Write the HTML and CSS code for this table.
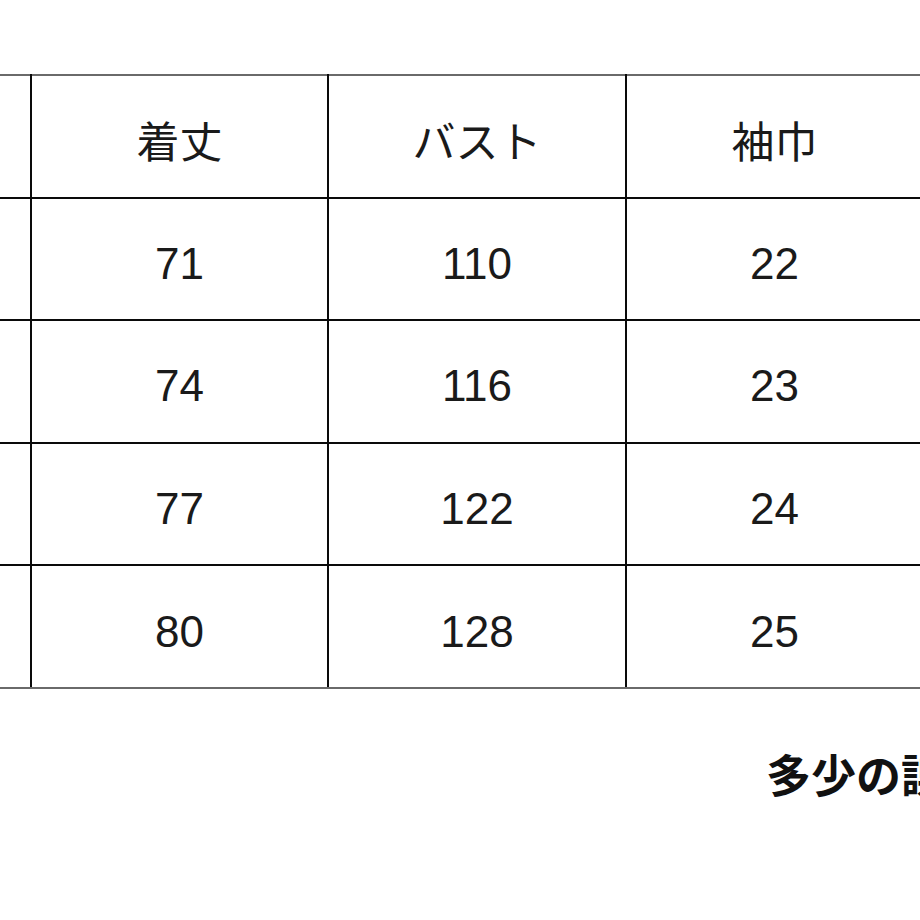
FILE: index.html
```html
<!DOCTYPE html>
<html lang="ja">
<head>
<meta charset="utf-8">
<link rel="stylesheet" href="styles.css">
</head>
<body>
<div class="page">
  <table class="size-table">
    <tr class="row head">
      <td class="cell side"></td>
      <td class="cell">着丈</td>
      <td class="cell">バスト</td>
      <td class="cell">袖巾</td>
      <td class="cell"></td>
    </tr>
    <tr class="row">
      <td class="cell side"></td>
      <td class="cell num">71</td>
      <td class="cell num">110</td>
      <td class="cell num">22</td>
      <td class="cell"></td>
    </tr>
    <tr class="row">
      <td class="cell side"></td>
      <td class="cell num">74</td>
      <td class="cell num">116</td>
      <td class="cell num">23</td>
      <td class="cell"></td>
    </tr>
    <tr class="row">
      <td class="cell side"></td>
      <td class="cell num">77</td>
      <td class="cell num">122</td>
      <td class="cell num">24</td>
      <td class="cell"></td>
    </tr>
    <tr class="row last">
      <td class="cell side"></td>
      <td class="cell num">80</td>
      <td class="cell num">128</td>
      <td class="cell num">25</td>
      <td class="cell"></td>
    </tr>
  </table>
  <p class="note">多少の誤差はご了承ください。</p>
</div>
</body>
</html>
```

FILE: styles.css
```css
html, body {
  margin: 0;
  padding: 0;
  background: #ffffff;
  overflow: hidden;
}

.page {
  width: 920px;
  height: 920px;
  overflow: hidden;
  padding-top: 74px;
  box-sizing: border-box;
}

.size-table {
  border-collapse: collapse;
  table-layout: fixed;
  width: 1488px;
  margin-left: -268px;
  font-family: "Liberation Sans", "Noto Sans CJK JP", sans-serif;
  font-size: 44px;
  color: #1a1a1a;
}

.row {
  height: 122.6px;
}

.cell {
  width: 297.6px;
  border: 2px solid #0a0a0a;
  text-align: center;
  vertical-align: middle;
  padding: 8px 0 0 0;
  line-height: 1;
  box-sizing: border-box;
}

.head .cell {
  border-top-color: #6a6a6a;
  font-family: "Noto Sans CJK JP", sans-serif;
  font-size: 43px;
  padding-top: 6px;
}

.num {
  padding-top: 10px;
}

.last .cell {
  border-bottom-color: #6a6a6a;
}

.note {
  margin: 60px 0 0 0;
  padding-left: 766px;
  white-space: nowrap;
  font-family: "Noto Sans CJK JP", sans-serif;
  font-weight: 700;
  font-size: 45px;
  line-height: 1.1;
  color: #111111;
}
```
